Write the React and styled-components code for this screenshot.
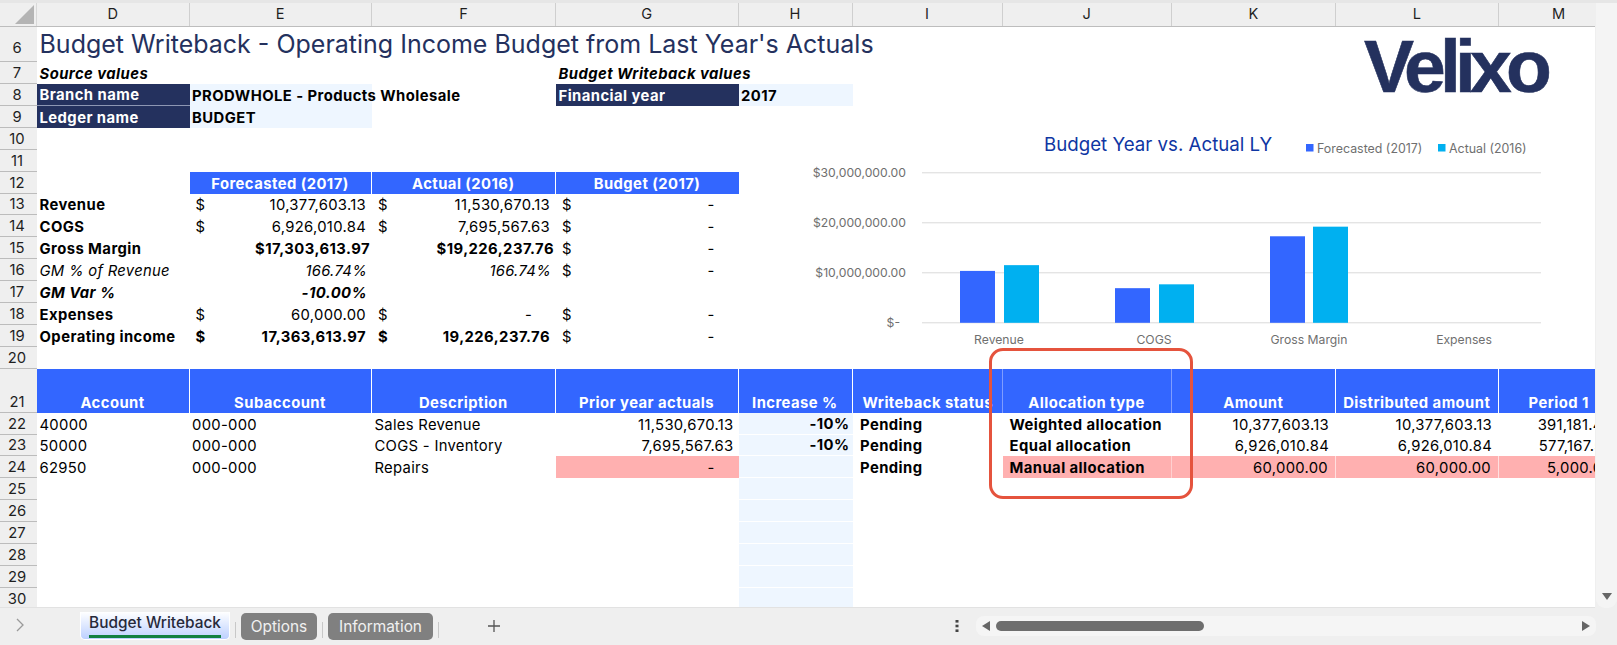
import React from "react";
import styled, { createGlobalStyle } from "styled-components";

const FONT = `Inter, "Noto Sans", "Liberation Sans", sans-serif`;
const COLS = "37px 152.5px 182.5px 184px 182.5px 114px 150px 169.5px 164px 163px 120px";
const LETTERS = ["D", "E", "F", "G", "H", "I", "J", "K", "L", "M"];
const BLUE = "#3366ff";
const NAVY = "#24315e";
const PALE = "#eef6ff";
const PINK = "#ffb0b0";

const Global = createGlobalStyle`
  html, body { margin: 0; padding: 0; background: #efefef; }
  body { width: 1617px; height: 645px; overflow: hidden; font-family: ${FONT}; }
`;

const Window = styled.div`
  position: relative;
  width: 1617px;
  height: 645px;
  display: flex;
  flex-direction: column;
  overflow: hidden;
  background: #efefef;
`;
const TopStrip = styled.div`height: 2.5px; background: #e6e6e6; flex: none;`;
const Workspace = styled.div`display: flex; flex: none; height: 605.5px;`;
const Sheet = styled.div`
  position: relative;
  width: 1594.5px;
  flex: none;
  overflow: hidden;
  background: #fff;
  border-bottom: 1px solid #e2e2e2;
  box-sizing: border-box;
`;
const ColHeaderRow = styled.div`
  display: grid;
  grid-template-columns: ${COLS};
  height: 24px;
  background: #efefef;
  border-bottom: 1px solid #bdbdbd;
  box-sizing: border-box;
`;
const Corner = styled.div`
  position: relative;
  border-right: 1px solid #d8d8d8;
  &::after {
    content: "";
    position: absolute;
    right: 2px;
    bottom: 2px;
    border-style: solid;
    border-width: 0 0 19px 19px;
    border-color: transparent transparent #b4b4b4 transparent;
  }
`;
const ColHeader = styled.div`
  display: flex;
  align-items: center;
  justify-content: center;
  font-size: 14.6px;
  color: #1f1f1f;
  border-right: 1px solid #cfcfcf;
`;
const Grid = styled.div`
  display: grid;
  grid-template-columns: ${COLS};
`;
const RowNum = styled.div`
  height: ${(p) => p.$h}px;
  background: #efefef;
  border-bottom: 1px solid #bcbcbc;
  box-sizing: border-box;
  display: flex;
  align-items: flex-end;
  justify-content: center;
  font-size: 14.8px;
  line-height: 20px;
  color: #1f1f1f;
  padding-right: 3px;
  padding-bottom: ${(p) => p.$lift ?? 0}px;
`;
const Cell = styled.div`
  height: ${(p) => p.$h}px;
  box-sizing: border-box;
  display: flex;
  align-items: flex-end;
  justify-content: ${(p) => (p.$align === "right" ? "flex-end" : p.$align === "center" ? "center" : "flex-start")};
  padding: 0 ${(p) => p.$pad ?? 3}px 0 ${(p) => p.$left ?? 2.5}px;
  font-size: 14.8px;
  letter-spacing: ${(p) => (p.$bold ? 0.45 : 0.3)}px;
  line-height: 20px;
  white-space: nowrap;
  font-weight: ${(p) => (p.$bold ? 700 : 400)};
  font-style: ${(p) => (p.$italic ? "italic" : "normal")};
  color: ${(p) => p.$color || "#000"};
  background: ${(p) => p.$bg || "transparent"};
  border-right: ${(p) => (p.$sep ? `1px solid ${p.$sep}` : "0")};
  border-bottom: ${(p) => (p.$under ? `1px solid ${p.$under}` : "0")};
  overflow: ${(p) => (p.$spill ? "visible" : "hidden")};
`;
const Accounting = styled(Cell)`
  justify-content: space-between;
  padding-left: 6px;
  padding-right: ${(p) => p.$pad ?? 6}px;
`;
const Title = styled(Cell)`
  font-size: 25px;
  letter-spacing: 0;
  line-height: 32px;
  color: ${NAVY};
  padding-bottom: 2px;
`;

const Overlay = styled.div`
  position: absolute;
  left: 0;
  top: 0;
  width: 1594.5px;
  height: 605px;
  pointer-events: none;
`;
const Logo = styled.div`
  position: absolute;
  left: 1364px;
  top: 20px;
  font-family: "Liberation Sans", sans-serif;
  font-weight: 700;
  font-size: 75px;
  line-height: 86px;
  letter-spacing: -5.8px;
  color: ${NAVY};
  -webkit-text-stroke: 0.6px ${NAVY};
`;
const ChartSvg = styled.svg`
  position: absolute;
  left: 780px;
  top: 115.5px;
`;
const Callout = styled.div`
  position: absolute;
  left: 989px;
  top: 345px;
  width: 204px;
  height: 151px;
  box-sizing: border-box;
  border: 3px solid #e5533d;
  border-radius: 14px;
`;

const VScroll = styled.div`
  position: relative;
  flex: 1;
  background: #f4f4f4;
  border-radius: 0 0 9px 9px;
  margin-left: 1.5px;
`;
const DownArrow = styled.div`
  position: absolute;
  left: 6px;
  bottom: 8px;
  border-style: solid;
  border-width: 7px 5px 0 5px;
  border-color: #666 transparent transparent transparent;
`;

const TabBar = styled.div`
  flex: 1;
  display: flex;
  align-items: flex-start;
  position: relative;
`;
const Chevron = styled.svg`margin: 9px 0 0 15px; flex: none;`;
const ActiveTab = styled.div`
  margin: 4px 0 0 55px;
  width: 150px;
  height: 28px;
  flex: none;
  box-sizing: border-box;
  padding: 1px 8px 0;
  border: 1px solid #fff;
  border-top: 0;
  border-radius: 0 0 5px 5px;
  background: linear-gradient(#ffffff, #bcd0ff);
  font-size: 15.4px;
  font-weight: 500;
  line-height: 20px;
  text-align: center;
  color: #27293a;
  white-space: nowrap;
  &::after {
    content: "";
    display: block;
    height: 2.5px;
    margin-top: 2px;
    background: #118040;
  }
`;
const Sep = styled.div`
  width: 1px;
  height: 16px;
  flex: none;
  margin: 14px ${(p) => p.$r}px 0 ${(p) => p.$l}px;
  background: #c8c8c8;
`;
const GreyTab = styled.div`
  width: ${(p) => p.$w}px;
  height: 27px;
  flex: none;
  margin-top: 5px;
  border-radius: 5px;
  background: #808080;
  color: #f0f0f0;
  font-size: 15.4px;
  line-height: 28px;
  text-align: center;
`;
const AddTab = styled.svg`margin: 11px 0 0 48px; flex: none;`;
const Dots = styled.svg`position: absolute; left: 954px; top: 11px;`;
const HScroll = styled.div`
  position: absolute;
  left: 976px;
  top: 8px;
  width: 620px;
  height: 20px;
  border-radius: 8px;
  background: #f5f5f5;
  display: flex;
  align-items: center;
  padding: 0 6px;
  box-sizing: border-box;
`;
const ArrowLeft = styled.div`
  border-style: solid;
  border-width: 5px 8px 5px 0;
  border-color: transparent #666 transparent transparent;
  flex: none;
`;
const ArrowRight = styled.div`
  border-style: solid;
  border-width: 5px 0 5px 8px;
  border-color: transparent transparent transparent #666;
  margin-left: auto;
  flex: none;
`;
const Thumb = styled.div`
  width: 208px;
  height: 10px;
  margin-left: 6px;
  border-radius: 5px;
  background: #6e6e6e;
  flex: none;
`;

const R = 21.95;
const R2 = 21.9;

const Blank = ({ h, n = 1 }) =>
  Array.from({ length: n }).map((_, i) => <Cell key={i} $h={h} />);

const Dollar = ({ h, v, bold }) => (
  <Accounting $h={h} $bold={bold}>
    <span>$</span>
    <span>{v}</span>
  </Accounting>
);
const BudgetDash = ({ h }) => (
  <Accounting $h={h} $pad={24}>
    <span>$</span>
    <span>-</span>
  </Accounting>
);

const SummaryRow = ({ n, children }) => (
  <>
    <RowNum $h={R}>{n}</RowNum>
    {children}
    <Blank h={R} n={6} />
  </>
);

const tableRows = [
  { n: 22, a: "40000", d: "Sales Revenue", p: "11,530,670.13", inc: "-10%", t: "Weighted allocation", amt: "10,377,603.13", dist: "10,377,603.13", per: "391,181.42" },
  { n: 23, a: "50000", d: "COGS - Inventory", p: "7,695,567.63", inc: "-10%", t: "Equal allocation", amt: "6,926,010.84", dist: "6,926,010.84", per: "577,167.57" },
  { n: 24, a: "62950", d: "Repairs", p: "-", inc: "", t: "Manual allocation", amt: "60,000.00", dist: "60,000.00", per: "5,000.00", flag: true },
];

const heads = [
  { t: "Account", sep: "#fff" },
  { t: "Subaccount", sep: "#fff" },
  { t: "Description", sep: "#fff" },
  { t: "Prior year actuals", sep: "#fff" },
  { t: "Increase %", sep: "#fff" },
  { t: "Writeback status", sep: "#7f9dff", left: 10 },
  { t: "Allocation type", sep: "#7f9dff" },
  { t: "Amount", sep: "#fff" },
  { t: "Distributed amount", sep: "#fff" },
  { t: "Period 1" },
];

const Chart = () => {
  const base = 204.8;
  const unit = 5;
  const bars = [
    [180, 10.3776, 224, 11.5307],
    [335, 6.926, 379, 7.6956],
    [490, 17.3036, 533, 19.2262],
  ];
  const grid = [
    [54.8, "$30,000,000.00", 126],
    [104.8, "$20,000,000.00", 126],
    [154.8, "$10,000,000.00", 126],
    [204.8, "$-", 120],
  ];
  const cats = [["Revenue", 219], ["COGS", 374], ["Gross Margin", 529], ["Expenses", 684]];
  return (
    <ChartSvg width="780" height="240" viewBox="0 0 780 240" fontFamily="Inter, sans-serif">
      <text x="264" y="32.5" fontSize="18.7" fill="#0f36a3">Budget Year vs. Actual LY</text>
      <rect x="526" y="26" width="7.5" height="7.5" fill={BLUE} />
      <text x="537" y="34.5" fontSize="12.4" fill="#6f6f6f">Forecasted (2017)</text>
      <rect x="658" y="26" width="7.5" height="7.5" fill="#00b0f0" />
      <text x="669" y="34.5" fontSize="12.4" fill="#6f6f6f">Actual (2016)</text>
      {grid.map(([y, t, x]) => (
        <g key={t}>
          <line x1="142" x2="761" y1={y} y2={y} stroke="#d9d9d9" strokeWidth="1" />
          <text x={x} y={y + 4.5} textAnchor="end" fontSize="12.2" fill="#6f6f6f">{t}</text>
        </g>
      ))}
      {bars.map(([x1, a, x2, b]) => (
        <g key={x1}>
          <rect x={x1} y={base - a * unit} width="35" height={a * unit} fill={BLUE} />
          <rect x={x2} y={base - b * unit} width="35" height={b * unit} fill="#00b0f0" />
        </g>
      ))}
      {cats.map(([t, x]) => (
        <text key={t} x={x} y="226" textAnchor="middle" fontSize="12.2" fill="#6f6f6f">{t}</text>
      ))}
    </ChartSvg>
  );
};

export default function App() {
  return (
    <Window>
      <Global />
      <TopStrip />
      <Workspace>
        <Sheet>
          <ColHeaderRow>
            <Corner />
            {LETTERS.map((l) => <ColHeader key={l}>{l}</ColHeader>)}
          </ColHeaderRow>
          <Grid>
            <RowNum $h={35.4} $lift={3}>6</RowNum>
            <Title $h={35.4} $spill>Budget Writeback - Operating Income Budget from Last Year's Actuals</Title>
            <Blank h={35.4} n={9} />

            <RowNum $h={R}>7</RowNum>
            <Cell $h={R} $bold $italic $spill>Source values</Cell>
            <Blank h={R} n={2} />
            <Cell $h={R} $bold $italic $spill>Budget Writeback values</Cell>
            <Blank h={R} n={6} />

            <RowNum $h={R}>8</RowNum>
            <Cell $h={R} $bold $bg={NAVY} $color="#fff" $under="#8d96b3">Branch name</Cell>
            <Cell $h={R} $bold $bg={PALE} $spill>PRODWHOLE - Products Wholesale</Cell>
            <Blank h={R} />
            <Cell $h={R} $bold $bg={NAVY} $color="#fff">Financial year</Cell>
            <Cell $h={R} $bold $bg={PALE}>2017</Cell>
            <Blank h={R} n={5} />

            <RowNum $h={R}>9</RowNum>
            <Cell $h={R} $bold $bg={NAVY} $color="#fff">Ledger name</Cell>
            <Cell $h={R} $bold $bg={PALE}>BUDGET</Cell>
            <Blank h={R} n={8} />

            <RowNum $h={R}>10</RowNum><Blank h={R} n={10} />
            <RowNum $h={R}>11</RowNum><Blank h={R} n={10} />

            <SummaryRow n={12}>
              <Blank h={R} />
              <Cell $h={R} $bold $bg={BLUE} $color="#fff" $align="center" $sep="#fff">Forecasted (2017)</Cell>
              <Cell $h={R} $bold $bg={BLUE} $color="#fff" $align="center" $sep="#fff">Actual (2016)</Cell>
              <Cell $h={R} $bold $bg={BLUE} $color="#fff" $align="center">Budget (2017)</Cell>
            </SummaryRow>
            <SummaryRow n={13}>
              <Cell $h={R} $bold>Revenue</Cell>
              <Dollar h={R} v="10,377,603.13" />
              <Dollar h={R} v="11,530,670.13" />
              <BudgetDash h={R} />
            </SummaryRow>
            <SummaryRow n={14}>
              <Cell $h={R} $bold>COGS</Cell>
              <Dollar h={R} v="6,926,010.84" />
              <Dollar h={R} v="7,695,567.63" />
              <BudgetDash h={R} />
            </SummaryRow>
            <SummaryRow n={15}>
              <Cell $h={R} $bold>Gross Margin</Cell>
              <Cell $h={R} $bold $align="right" $pad={2}>$17,303,613.97</Cell>
              <Cell $h={R} $bold $align="right" $pad={2}>$19,226,237.76</Cell>
              <BudgetDash h={R} />
            </SummaryRow>
            <SummaryRow n={16}>
              <Cell $h={R} $italic>GM % of Revenue</Cell>
              <Cell $h={R} $italic $align="right" $pad={5}>166.74%</Cell>
              <Cell $h={R} $italic $align="right" $pad={5}>166.74%</Cell>
              <BudgetDash h={R} />
            </SummaryRow>
            <SummaryRow n={17}>
              <Cell $h={R} $bold $italic>GM Var %</Cell>
              <Cell $h={R} $bold $italic $align="right" $pad={5}>-10.00%</Cell>
              <Blank h={R} n={2} />
            </SummaryRow>
            <SummaryRow n={18}>
              <Cell $h={R} $bold>Expenses</Cell>
              <Dollar h={R} v="60,000.00" />
              <BudgetDash h={R} />
              <BudgetDash h={R} />
            </SummaryRow>
            <SummaryRow n={19}>
              <Cell $h={R} $bold>Operating income</Cell>
              <Dollar h={R} v="17,363,613.97" bold />
              <Dollar h={R} v="19,226,237.76" bold />
              <BudgetDash h={R} />
            </SummaryRow>
            <RowNum $h={R}>20</RowNum><Blank h={R} n={10} />

            <RowNum $h={43.7}>21</RowNum>
            {heads.map((h) => (
              <Cell key={h.t} $h={43.7} $bold $bg={BLUE} $color="#fff" $align={h.left ? "left" : "center"} $left={h.left} $sep={h.sep}>{h.t}</Cell>
            ))}

            {tableRows.map((r) => (
              <React.Fragment key={r.n}>
                <RowNum $h={R2}>{r.n}</RowNum>
                <Cell $h={R2}>{r.a}</Cell>
                <Cell $h={R2}>000-000</Cell>
                <Cell $h={R2}>{r.d}</Cell>
                <Cell $h={R2} $align="right" $bg={r.flag ? PINK : undefined} $pad={r.flag ? 24 : 5}>{r.p}</Cell>
                <Cell $h={R2} $bold $align="right" $bg={PALE} $under="#fff">{r.inc}</Cell>
                <Cell $h={R2} $bold $left={7.5}>Pending</Cell>
                <Cell $h={R2} $bold $left={7} $bg={r.flag ? PINK : undefined} $sep={r.flag ? "#ffd0d0" : undefined}>{r.t}</Cell>
                <Cell $h={R2} $align="right" $pad={7} $bg={r.flag ? PINK : undefined} $sep={r.flag ? "#ffe0e0" : undefined}>{r.amt}</Cell>
                <Cell $h={R2} $align="right" $pad={7} $bg={r.flag ? PINK : undefined} $sep={r.flag ? "#ffe0e0" : undefined}>{r.dist}</Cell>
                <Cell $h={R2} $align="right" $pad={7} $bg={r.flag ? PINK : undefined}>{r.per}</Cell>
              </React.Fragment>
            ))}
            {[25, 26, 27, 28, 29, 30].map((n) => (
              <React.Fragment key={n}>
                <RowNum $h={R2}>{n}</RowNum>
                <Blank h={R2} n={4} />
                <Cell $h={R2} $bg={PALE} $under="#fff" />
                <Blank h={R2} n={5} />
              </React.Fragment>
            ))}
          </Grid>
          <Overlay>
            <Logo>Velixo</Logo>
            <Chart />
            <Callout />
          </Overlay>
        </Sheet>
        <VScroll><DownArrow /></VScroll>
      </Workspace>
      <TabBar>
        <Chevron width="10" height="16" viewBox="0 0 10 16">
          <path d="M2 2l6 6-6 6" fill="none" stroke="#9a9a9a" strokeWidth="1.3" />
        </Chevron>
        <ActiveTab>Budget Writeback</ActiveTab>
        <Sep $l={5} $r={5} />
        <GreyTab $w={76}>Options</GreyTab>
        <Sep $l={5} $r={5} />
        <GreyTab $w={105}>Information</GreyTab>
        <Sep $l={5} $r={0} />
        <AddTab width="14" height="14" viewBox="0 0 14 14">
          <path d="M7 1v12M1 7h12" stroke="#555" strokeWidth="1.3" />
        </AddTab>
        <Dots width="6" height="14" viewBox="0 0 6 14">
          <rect x="1.5" y="1" width="3" height="2.6" fill="#444" />
          <rect x="1.5" y="5.7" width="3" height="2.6" fill="#444" />
          <rect x="1.5" y="10.4" width="3" height="2.6" fill="#444" />
        </Dots>
        <HScroll>
          <ArrowLeft />
          <Thumb />
          <ArrowRight />
        </HScroll>
      </TabBar>
    </Window>
  );
}
